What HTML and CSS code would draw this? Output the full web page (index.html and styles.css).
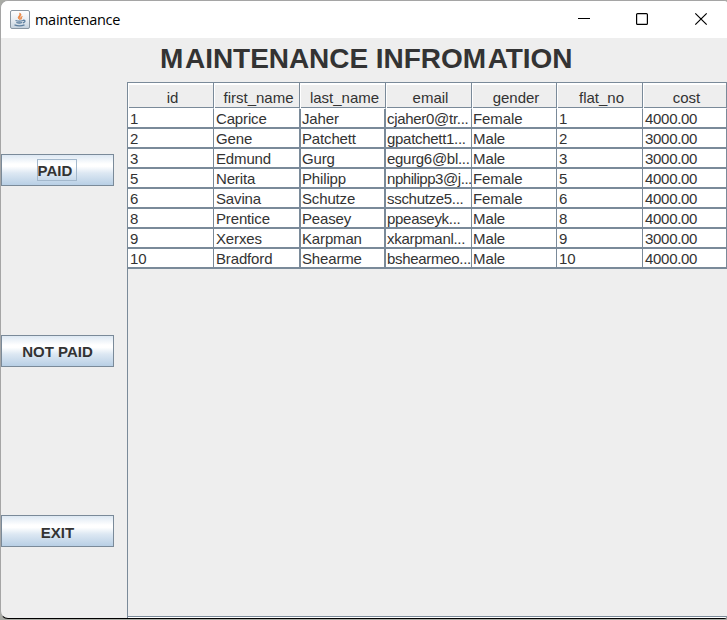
FILE: index.html
```html
<!DOCTYPE html>
<html lang="en">
<head>
<meta charset="utf-8">
<title>maintenance</title>
<link rel="stylesheet" href="styles.css">
</head>
<body>
<div class="window">
  <header class="titlebar">
    <svg class="app-icon" width="20" height="20" viewBox="0 0 20 20">
      <defs><linearGradient id="g" x1="0" y1="0" x2="0" y2="1"><stop offset="0" stop-color="#fff"/><stop offset=".5" stop-color="#e9eef3"/><stop offset="1" stop-color="#c3d0dc"/></linearGradient></defs>
      <rect x=".5" y=".5" width="19" height="18" rx="1.5" fill="url(#g)" stroke="#8996a2"/>
      <path d="M9.500 9.500C6 7 11 5.800 9.700 3C13 5.300 8.500 6.500 9.500 9.500M10.800 9.500C9.500 8 11 7 12.300 6.500C10.800 7.700 12.500 8 10.800 9.500" fill="#e8823c" stroke="#e8823c" stroke-width=".8"/>
      <path d="M5.500 10.500Q9.500 11.800 13 10.500M6.300 12.500Q9.500 13.500 12 12.500M13 10.300Q16 10 14.500 12L12.800 13M4.500 14.800Q9.500 16.800 14.500 14.800" fill="none" stroke="#5c7e9e" stroke-width="1.300"/>
    </svg>
    <span class="caption">maintenance</span>
    <svg class="controls" width="130" height="20" viewBox="0 0 130 20" fill="none" stroke="#000">
      <path d="M0 8.500H12" stroke-width="1"/>
      <rect x="58.600" y="3.600" width="10.800" height="10.800" rx="1" stroke-width="1.200"/>
      <path d="M117.300 3.300L128.700 14.700M128.700 3.300L117.300 14.700" stroke-width="1.200"/>
    </svg>
  </header>
  <main class="content">
    <h1><span class="initial">M</span><span>AINTENANCE INFRO</span><span class="initial">M</span><span>ATION</span></h1>
    <nav class="actions">
      <button class="focused"><span>PAID</span></button>
      <button><span>NOT PAID</span></button>
      <button><span>EXIT</span></button>
    </nav>
    <section class="pane">
      <table>
        <colgroup><col class="c1"><col class="c2"><col class="c3"><col class="c4"><col class="c5"><col class="c6"><col class="c7"></colgroup>
        <thead><tr><th>id</th><th>first_name</th><th>last_name</th><th>email</th><th>gender</th><th>flat_no</th><th>cost</th></tr></thead>
        <tbody>
          <tr><td>1</td><td>Caprice</td><td>Jaher</td><td>cjaher0@tr...</td><td>Female</td><td>1</td><td>4000.00</td></tr>
          <tr><td>2</td><td>Gene</td><td>Patchett</td><td>gpatchett1...</td><td>Male</td><td>2</td><td>3000.00</td></tr>
          <tr><td>3</td><td>Edmund</td><td>Gurg</td><td>egurg6@bl...</td><td>Male</td><td>3</td><td>3000.00</td></tr>
          <tr><td>5</td><td>Nerita</td><td>Philipp</td><td class="tight">nphilipp3@j...</td><td>Female</td><td>5</td><td>4000.00</td></tr>
          <tr><td>6</td><td>Savina</td><td>Schutze</td><td>sschutze5...</td><td>Female</td><td>6</td><td>4000.00</td></tr>
          <tr><td>8</td><td>Prentice</td><td>Peasey</td><td>ppeaseyk...</td><td>Male</td><td>8</td><td>4000.00</td></tr>
          <tr><td>9</td><td>Xerxes</td><td>Karpman</td><td>xkarpmanl...</td><td>Male</td><td>9</td><td>3000.00</td></tr>
          <tr><td>10</td><td>Bradford</td><td>Shearme</td><td>bshearmeo...</td><td>Male</td><td>10</td><td>4000.00</td></tr>
        </tbody>
      </table>
    </section>
  </main>
</div>
</body>
</html>
```
FILE: styles.css
```css
* { box-sizing: border-box; }
html { background: #a9aba5; }
body { margin: 0; height: 620px; overflow: hidden; font-family: "Liberation Sans", Arial, sans-serif; color: #333; }
.window {
  width: 727px; height: 619px; background: #eee; overflow: hidden;
  border: 1px solid #a5a5a5; border-right: 0; border-bottom-color: #000;
  border-radius: 8px 3px 3px 8px;
}
.titlebar { display: flex; align-items: center; height: 37px; padding: 0 19px 0 9px; background: #fff; }
.caption { flex: 1; margin-left: 5px; color: #000; font: 14.5px/20px "Open Sans", sans-serif; letter-spacing: -.3px; }
.app-icon, .controls { display: block; }
.content { display: grid; grid-template: 44px 536px / 126px 600px; }
h1 {
  grid-column: 1 / 3; margin: 0; padding: 2px 0 0 159px;
  font-size: 28px; line-height: 37px; white-space: nowrap; letter-spacing: -.05px;
}
.initial { letter-spacing: 1.7px; }
.actions { display: flex; flex-direction: column; padding-top: 72px; }
button {
  flex: none; width: 113px; height: 32px; margin: 0 0 148.500px; padding: 0; border: 1px solid #7a8a99;
  background: linear-gradient(#dde8f3 0, #fff 30%, #fff 38%, #dde8f3 60%, #b8cfe5 100%);
  color: #333; font: bold 15px/18px "Liberation Sans", Arial, sans-serif;
}
button span { display: inline-block; padding: 3px 0 0; }
button.focused span { width: 40px; height: 22px; border: 1px solid #a3b8cc; margin-right: 2px; padding: 2px 0 0; text-align: left; }
.pane { height: 536px; overflow: hidden; border: solid #7a8a99; border-width: 1px 0 0 1px; box-shadow: inset 0 -1px #fff, inset 0 -2px #7a8a99; }
table { width: 599px; table-layout: fixed; border-collapse: separate; border-spacing: 0; font-size: 15px; }
.c1 { width: 86px; } .c2 { width: 86px; } .c3 { width: 86px; }
.c4 { width: 86px; } .c5 { width: 85px; } .c6 { width: 86px; } .c7 { width: 84px; }
th {
  height: 26px; padding: 4px 0 0 4px; font-weight: normal; line-height: 17px; white-space: nowrap;
  border-right: 1px solid #7a8a99; border-bottom: 1px solid #fff;
  box-shadow: inset 1px 2px #fff, inset 0 -1px #7a8a99;
}
td {
  height: 20px; padding: 1px 0 0 2px; line-height: 17px; background: #fff; white-space: nowrap; overflow: hidden;
  border-right: 1px solid #7a8a99; border-bottom: 2px solid #7a8a99;
}
td:nth-child(2), td:nth-child(3) { letter-spacing: -.15px; }
td:nth-child(3) { box-shadow: inset 1px 0 #7a8a99; border-right-width: 2px; }
td:nth-child(4) { padding-left: 1px; letter-spacing: -.3px; }
td:nth-child(5) { padding-left: 1px; letter-spacing: -.1px; }
td:nth-child(7) { letter-spacing: -.3px; }
td:nth-child(4).tight { letter-spacing: -.45px; }
```
